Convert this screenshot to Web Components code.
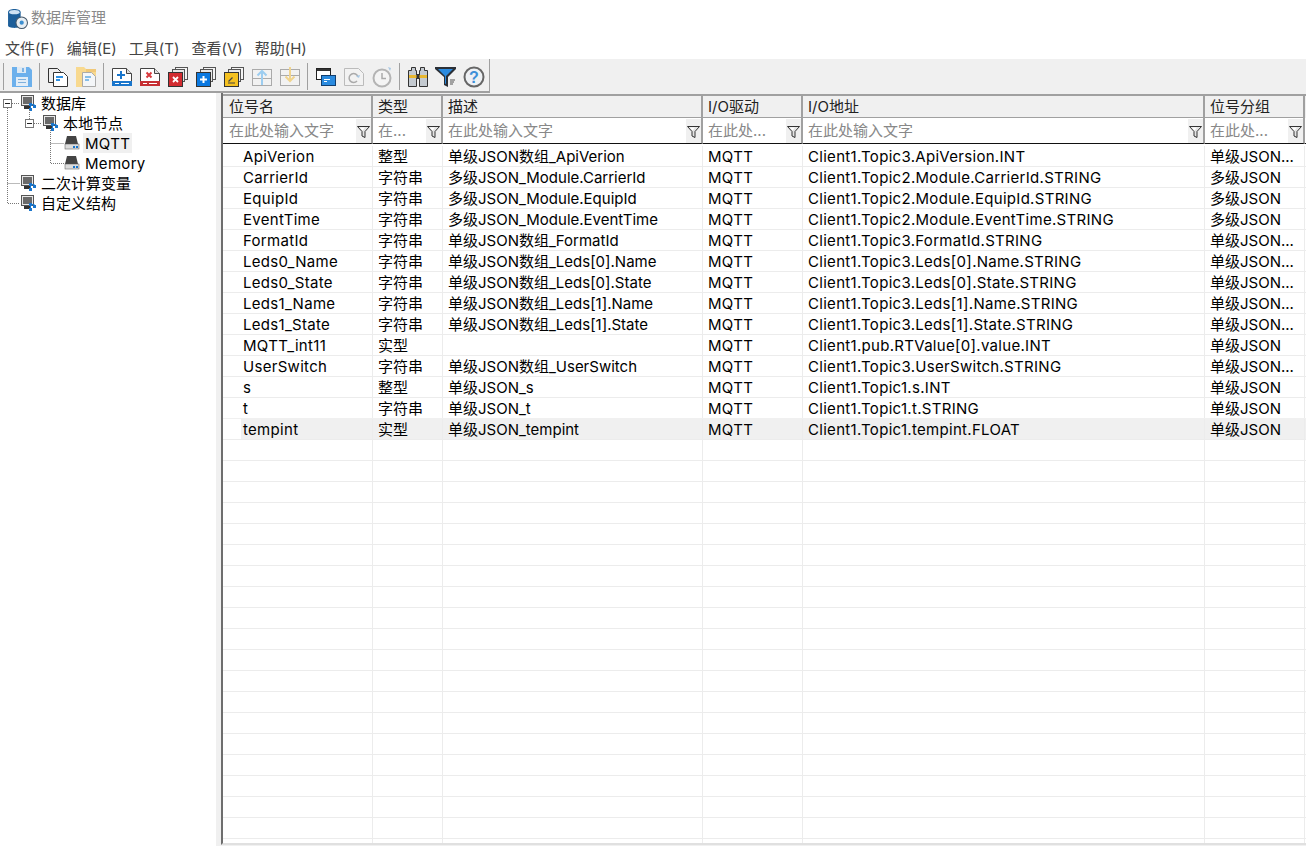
<!DOCTYPE html>
<html lang="zh">
<head>
<meta charset="utf-8">
<title>数据库管理</title>
<style>
	html, body { margin: 0; height: 100%; background: #fff; overflow: hidden; }
	body { font: 15px Inter, "Noto Sans CJK SC", sans-serif; color: #000; }
</style>
</head>
<body>
<db-app>
	<db-titlebar>数据库管理</db-titlebar>
	<db-menubar>
		<span>文件(F)</span><span>编辑(E)</span><span>工具(T)</span><span>查看(V)</span><span>帮助(H)</span>
	</db-menubar>
	<db-toolbar></db-toolbar>
	<db-main>
		<db-tree slot="left"></db-tree>
		<db-grid slot="right"></db-grid>
	</db-main>
</db-app>

<script>
// toolbar icons, all drawn on a 22x22 box
const stack = (fill, mark) => `
	<rect x="8.500" y="1.500" width="12" height="12" fill="#f4f4f4" stroke="#555"/>
	<rect x="5.500" y="3.500" width="12" height="12" fill="#e8e8e8" stroke="#555"/>
	<rect x="1.500" y="6.500" width="14" height="14" fill="${fill}" stroke="#333"/>${mark}`;
const newDoc = (color, mark) => `
	<path d="M1.500 2.500h14l5 5v12h-19z" fill="#fff" stroke="#444"/>
	<path d="M15.500 2.500v5h5" fill="#ddd" stroke="#444"/>
	<rect x="1" y="15" width="20" height="5" fill="${color}"/>
	<rect x="4" y="17" width="4" height="1" fill="#fff"/><rect x="10" y="17" width="8" height="1" fill="#fff"/>${mark}`;
const ICONS = {
	save: `<path d="M1 1h17l3 3v17H1z" fill="#6cb0ec"/><rect x="6" y="1" width="9" height="6" fill="#dde9f4"/><rect x="11" y="2" width="2" height="4" fill="#7fb4e4"/>
		<rect x="5" y="11" width="12" height="9" fill="#e2edf7"/><rect x="7" y="13" width="8" height="1" fill="#7fb0dc"/><rect x="7" y="16" width="8" height="1" fill="#7fb0dc"/>`,
	copy: `<path d="M1.500 2.500h9l3 3v11h-12z" fill="#eee" stroke="#333"/><path d="M6.500 6.500h10l4 4v10h-14z" fill="#fff" stroke="#333"/>
		<rect x="9" y="10" width="7" height="2" fill="#2f8fe0"/><rect x="9" y="13" width="4" height="2" fill="#2f8fe0"/>`,
	paste: `<path d="M1 1h8l2 2h10v18H1z" fill="#f8d98f"/><path d="M11 3h10v3H11z" fill="#f0c878"/><path d="M7.500 6.500h9l4 4v10h-13z" fill="#f4f6f8" stroke="#aaa"/>
		<rect x="10" y="10" width="6" height="2" fill="#85bde8"/><rect x="10" y="13" width="4" height="2" fill="#85bde8"/>`,
	addDoc: newDoc('#1a76cc', '<path d="M10 5v8M6 9h8" stroke="#1a76cc" stroke-width="2"/>'),
	delDoc: newDoc('#c62f33', '<path d="M7.500 6.500l5 5M12.500 6.500l-5 5" stroke="#d83a3e" stroke-width="2"/>'),
	delBox: stack('#d22b30', '<path d="M6 11l5 5M11 11l-5 5" stroke="#fff" stroke-width="1.800"/>'),
	addBox: stack('#0a78e0', '<path d="M8.500 10v7M5 13.500h7" stroke="#fff" stroke-width="2"/>'),
	editBox: stack('#f5c120', '<path d="M5 17h7M5.500 15.500l4-4" stroke="#444" stroke-width="1.200" fill="none"/>'),
	moveUp: `<rect x="1.500" y="3.500" width="19" height="16" fill="#f2f2f2" stroke="#aaa"/><path d="M1.500 12.500h19" stroke="#aaa"/>
		<path d="M11 19V5M6.500 9.500L11 5l4.500 4.500" stroke="#9ccdf0" stroke-width="2" fill="none"/>`,
	moveDown: `<rect x="1.500" y="3.500" width="19" height="16" fill="#f2f2f2" stroke="#aaa"/><path d="M1.500 9.500h19" stroke="#aaa"/>
		<path d="M11 1v14M6.500 10.500L11 15l4.500-4.500" stroke="#f0d48e" stroke-width="2" fill="none"/>`,
	windows: `<rect x="1.500" y="2.500" width="14" height="11" fill="#fff" stroke="#222"/><rect x="2" y="3" width="13" height="2" fill="#333"/>
		<rect x="6.500" y="9.500" width="14" height="10" fill="#2a8be0" stroke="#123f70"/><rect x="9" y="13" width="6" height="1" fill="#fff"/><rect x="9" y="15" width="3" height="1" fill="#fff"/>`,
	history: `<path d="M1.500 2.500h14l5 5v12h-19z" fill="#f2f2f2" stroke="#bbb"/><path d="M15 11a4.500 4.500 0 1 0-1 4" stroke="#aaa" stroke-width="1.500" fill="none"/><path d="M13 10l3 2 1-3z" fill="#a8c8e4"/>`,
	clock: `<circle cx="11" cy="12" r="8.500" fill="#f4f4f4" stroke="#b4b4b4" stroke-width="2"/><path d="M11 7v5.500h4" stroke="#aaa" stroke-width="1.500" fill="none"/><path d="M17 1l3 1-1 3z" fill="#a8c8e4"/>`,
	binoculars: `<path d="M4.500 1.500h4v3h1v16h-8v-16h3zM13.500 1.500h4v3h3v16h-8v-16h1z" fill="#c4cad0" stroke="#333"/><rect x="2" y="9" width="18" height="3" fill="#e8b730"/><rect x="9.500" y="8" width="3" height="5" fill="#333"/>`,
	filter: `<path d="M0 1h21v2l-8 8v10l-4-2v-8L0 3z" fill="#2a2f36"/><path d="M3 3h15l-7 7v8l-1-.5V10z" fill="#2a8be0"/><path d="M15 14h5M15 16h4M15 18h3" stroke="#555"/>`,
	help: `<circle cx="11" cy="11" r="9.500" fill="#eef1f4" stroke="#666" stroke-width="2"/><text x="11" y="16.500" text-anchor="middle" font-family="Liberation Sans" font-weight="700" font-size="16" fill="#3d8fd8">?</text>`
};

class DbApp extends HTMLElement {
	constructor() {
		super();
		this.attachShadow({mode: "open"});
		this.shadowRoot.innerHTML = `
		<style>
			:host { display: flex; flex-direction: column; height: 846px; overflow: hidden; background: #fff; }
		</style>
		<slot></slot>`;
	}
}

class DbTitlebar extends HTMLElement {
	constructor() {
		super();
		this.attachShadow({mode: "open"});
		this.shadowRoot.innerHTML = `
		<style>
			:host { display: flex; align-items: center; gap: 3px; height: 36px; box-sizing: border-box; padding: 0 0 3px 7px; color: #8a8a8a; flex: none; }
			svg { display: block; margin-top: 3px; }
		</style>
		<svg width="21" height="21" viewBox="0 0 20 20">
			<path d="M1 4c0-2 3-3 6-3s6 1 6 3v13c0 1-3 2-6 2s-6-1-6-2z" fill="#1d5f9a"/>
			<ellipse cx="7" cy="4" rx="5" ry="2" fill="#cfe2f3"/>
			<circle cx="14" cy="14" r="5.500" fill="#e8eef3" stroke="#44586a"/>
			<circle cx="14" cy="14" r="2" fill="#3c8fd0"/>
		</svg>
		<slot></slot>`;
	}
}

class DbMenubar extends HTMLElement {
	constructor() {
		super();
		this.attachShadow({mode: "open"});
		this.shadowRoot.innerHTML = `
		<style>
			:host { display: flex; height: 23px; align-items: center; gap: 12px; padding-left: 5px; color: #444; flex: none; }
		</style>
		<slot></slot>`;
	}
}

class DbToolButton extends HTMLElement {
	constructor() {
		super();
		this.attachShadow({mode: "open"});
	}
	connectedCallback() {
		this.shadowRoot.innerHTML = `
		<style>
			:host { display: flex; width: 28px; height: 100%; align-items: center; justify-content: center; }
			svg { display: block; }
		</style>
		<svg width="22" height="22" viewBox="0 0 22 22">${ICONS[this.getAttribute('icon')]}</svg>`;
	}
}

class DbToolbar extends HTMLElement {
	constructor() {
		super();
		this.attachShadow({mode: "open"});
	}
	connectedCallback() {
		const groups = [['save'], ['copy', 'paste'], ['addDoc', 'delDoc', 'delBox', 'addBox', 'editBox', 'moveUp', 'moveDown'], ['windows', 'history', 'clock'], ['binoculars', 'filter', 'help']];
		const html = groups.map(g => g.map(i => `<db-tool-button icon="${i}"></db-tool-button>`).join('')).join('<i class="sep"></i>');
		this.shadowRoot.innerHTML = `
		<style>
			:host { display: block; height: 34px; background: #f0f0f0; flex: none; }
			.bar { display: flex; width: 490px; height: 34px; box-sizing: border-box; padding: 3px 0 0 3px; border-right: 1px solid #a0a0a0; border-bottom: 2px solid #a0a0a0; }
			.grip { width: 1px; background: #a0a0a0; margin: 1px 4px 1px 0; }
			.sep { width: 1px; background: #a0a0a0; margin: 1px 4px 1px 3px; }
		</style>
		<div class="bar"><i class="grip"></i>${html}</div>`;
	}
}

class DbMain extends HTMLElement {
	constructor() {
		super();
		this.attachShadow({mode: "open"});
		this.shadowRoot.innerHTML = `
		<style>
			:host { display: flex; flex: 1; min-height: 0; background: #f0f0f0; }
			.left { width: 216px; background: #fff; flex: none; }
			.split { width: 5px; flex: none; }
			.right { flex: 1; min-width: 0; }
		</style>
		<div class="left"><slot name="left"></slot></div>
		<div class="split"></div>
		<div class="right"><slot name="right"></slot></div>`;
	}
}

const nodeIcon = `<svg width="16" height="16" viewBox="0 0 16 16">
	<rect x="1.500" y=".5" width="12" height="10" fill="#e8e8e8" stroke="#555"/><rect x="3" y="2" width="9" height="7" fill="#6a6a6a"/>
	<rect x="4" y="11" width="7" height="3" fill="#333"/>
	<rect x="9" y="8" width="3" height="3" fill="#1a76cc"/><rect x="13" y="10" width="3" height="3" fill="#1a76cc"/><rect x="9" y="13" width="3" height="3" fill="#1a76cc"/><path d="M12 9.500h2.500M10.500 11v2" stroke="#1a76cc"/>
</svg>`;
const diskIcon = `<svg width="16" height="16" viewBox="0 0 16 16">
	<path d="M3 1h9l2 8H1z" fill="#444"/><rect x="1" y="9" width="14" height="5" fill="#dcdcdc" stroke="#555" stroke-width=".5"/>
	<rect x="9" y="11" width="2" height="2" fill="#1a76cc"/><rect x="12" y="11" width="2" height="2" fill="#1a76cc"/>
</svg>`;

class DbTreeItem extends HTMLElement {
	constructor() {
		super();
		this.attachShadow({mode: "open"});
	}
	connectedCallback() {
		const icon = this.getAttribute('icon') == 'disk' ? diskIcon : nodeIcon;
		this.shadowRoot.innerHTML = `
		<style>
			:host { display: flex; align-items: center; height: 20px; padding-left: calc(var(--indent, 0) * 22px + 20px); }
			svg { display: block; flex: none; margin-right: 5px; }
			:host([selected]) span { background: #f0f0f0; }
			:host([icon=disk]) span { letter-spacing: .3px; }
			span { display: block; height: 20px; line-height: 22px; padding: 0 2px; margin-left: -2px; white-space: nowrap; }
		</style>
		${icon}<span><slot></slot></span>`;
	}
}

class DbTree extends HTMLElement {
	constructor() {
		super();
		this.attachShadow({mode: "open"});
		const box = (x, y) => `<rect x="${x}.5" y="${y}.5" width="8" height="8" fill="#fff" stroke="#777"/><path d="M${x + 2} ${y + 4.5}h5" stroke="#222"/>`;
		this.shadowRoot.innerHTML = `
		<style>
			:host { display: block; position: relative; }
			svg.lines { position: absolute; left: 0; top: -93px; pointer-events: none; }
		</style>
		<svg class="lines" width="216" height="300" viewBox="0 0 216 300">
			<path d="M7.500 108V203.500H20M7.500 183.500H20M12 103.500h8M29.500 110V119M34 123.500h8M50.500 130V163.500H64M50.500 143.500H64" fill="none" stroke="#777" stroke-dasharray="1 1"/>
			${box(3, 99)}${box(25, 119)}
		</svg>
		<db-tree-item>数据库</db-tree-item>
		<db-tree-item style="--indent:1">本地节点</db-tree-item>
		<db-tree-item style="--indent:2" icon="disk" selected>MQTT</db-tree-item>
		<db-tree-item style="--indent:2" icon="disk">Memory</db-tree-item>
		<db-tree-item>二次计算变量</db-tree-item>
		<db-tree-item>自定义结构</db-tree-item>`;
	}
}

const COLS = '150px 70px 260px 100px 402px 100px';
const HEADERS = ['位号名', '类型', '描述', 'I/O驱动', 'I/O地址', '位号分组'];
const HINTS = ['在此处输入文字', '在...', '在此处输入文字', '在此处...', '在此处输入文字', '在此处...'];
const ROWS = [
	['ApiVerion', '整型', '单级JSON数组_ApiVerion', 'MQTT', 'Client1.Topic3.ApiVersion.INT', '单级JSON...'],
	['CarrierId', '字符串', '多级JSON_Module.CarrierId', 'MQTT', 'Client1.Topic2.Module.CarrierId.STRING', '多级JSON'],
	['EquipId', '字符串', '多级JSON_Module.EquipId', 'MQTT', 'Client1.Topic2.Module.EquipId.STRING', '多级JSON'],
	['EventTime', '字符串', '多级JSON_Module.EventTime', 'MQTT', 'Client1.Topic2.Module.EventTime.STRING', '多级JSON'],
	['FormatId', '字符串', '单级JSON数组_FormatId', 'MQTT', 'Client1.Topic3.FormatId.STRING', '单级JSON...'],
	['Leds0_Name', '字符串', '单级JSON数组_Leds[0].Name', 'MQTT', 'Client1.Topic3.Leds[0].Name.STRING', '单级JSON...'],
	['Leds0_State', '字符串', '单级JSON数组_Leds[0].State', 'MQTT', 'Client1.Topic3.Leds[0].State.STRING', '单级JSON...'],
	['Leds1_Name', '字符串', '单级JSON数组_Leds[1].Name', 'MQTT', 'Client1.Topic3.Leds[1].Name.STRING', '单级JSON...'],
	['Leds1_State', '字符串', '单级JSON数组_Leds[1].State', 'MQTT', 'Client1.Topic3.Leds[1].State.STRING', '单级JSON...'],
	['MQTT_int11', '实型', '', 'MQTT', 'Client1.pub.RTValue[0].value.INT', '单级JSON'],
	['UserSwitch', '字符串', '单级JSON数组_UserSwitch', 'MQTT', 'Client1.Topic3.UserSwitch.STRING', '单级JSON...'],
	['s', '整型', '单级JSON_s', 'MQTT', 'Client1.Topic1.s.INT', '单级JSON'],
	['t', '字符串', '单级JSON_t', 'MQTT', 'Client1.Topic1.t.STRING', '单级JSON'],
	['tempint', '实型', '单级JSON_tempint', 'MQTT', 'Client1.Topic1.tempint.FLOAT', '单级JSON']
];

class DbGridRow extends HTMLElement {
	constructor() {
		super();
		this.attachShadow({mode: "open"});
		this.shadowRoot.innerHTML = `
		<style>
			:host { display: grid; grid-template-columns: ${COLS} 1fr; height: 21px; box-sizing: border-box; border-top: 1px solid #ececec; }
			:host(:first-of-type) { border-top-color: transparent; }
			:host([hot]) { border-top-color: #f0f0f0; }
		</style>
		<slot></slot>`;
	}
}

class DbGridCell extends HTMLElement {
	constructor() {
		super();
		this.attachShadow({mode: "open"});
		this.shadowRoot.innerHTML = `
		<style>
			:host { display: block; box-sizing: border-box; height: 20px; padding: 1px 0 0 5px; line-height: 20px; border-right: 1px solid #ececec; white-space: nowrap; overflow: hidden; }
			:host([first]) { padding-left: 0; }
			:host([first]) span { display: block; margin-left: 18px; padding-left: 2px; }
			:host([wide]) span { letter-spacing: .3px; }
			:host([hot]) { background: #f0f0f0; }
			:host([hot][first]) { background: #fff; padding-top: 0; }
			:host([hot][first]) span { background: #f0f0f0; padding-top: 1px; height: 19px; }
		</style>
		<span><slot></slot></span>`;
	}
}

class DbGrid extends HTMLElement {
	constructor() {
		super();
		this.attachShadow({mode: "open"});
		const funnel = `<svg width="13" height="13" viewBox="0 0 13 13"><path d="M.5 1.500h12L8 6.500v6l-3-1.500V6.500z" fill="#e4e4e4" stroke="#333"/><path d="M3 2.500h5L5.500 5.500z" fill="#fff"/></svg>`;
		const head = HEADERS.map(h => `<div class="h"><span>${h}</span></div>`).join('');
		const hint = HINTS.map(h => `<div class="f"><span>${h}</span><b>${funnel}</b></div>`).join('');
		const wide = [true, false, false, true, true, false];
		let body = '';
		ROWS.forEach((r, i) => {
			const hot = i == ROWS.length - 1 ? ' hot' : '';
			const cells = r.map((c, j) => `<db-grid-cell${j == 0 ? ' first' : ''}${wide[j] ? ' wide' : ''}${hot}>${c}</db-grid-cell>`).join('');
			body += `<db-grid-row${hot}>${cells}<db-grid-cell${hot}></db-grid-cell></db-grid-row>`;
		});
		for (let i = 0; i < 20; i++) {
			body += `<db-grid-row>${HEADERS.map(() => '<db-grid-cell></db-grid-cell>').join('')}<db-grid-cell></db-grid-cell></db-grid-row>`;
		}
		this.shadowRoot.innerHTML = `
		<style>
			:host { display: block; height: 752px; box-sizing: border-box; background: #fff; border-left: 2px solid #6e6e6e; border-bottom: 2px solid #e0e0e0; overflow: hidden; }
			.row { display: grid; grid-template-columns: ${COLS} 1fr; }
			.top { height: 1px; background: #f0f0f0; }
			.head { background: #f0f0f0; border-top: 2px solid #a0a0a0; }
			.h { height: 22px; box-sizing: border-box; border-right: 2px solid #a0a0a0; border-bottom: 1px solid #a0a0a0; padding-left: 5px; line-height: 21px; color: #222; }
			.h:first-child, .f:first-child { padding-left: 6px; }
			.hint { background: #fff; margin-bottom: 1px; }
			.f { height: 26px; box-sizing: border-box; display: flex; border-right: 2px solid #a0a0a0; border-bottom: 1px solid #111; padding-left: 5px; color: #888; line-height: 26px; }
			.f span { flex: 1; white-space: nowrap; overflow: hidden; }
			.f b { width: 15px; margin-top: 1px; background: #f0f0f0; display: flex; align-items: center; justify-content: center; font-weight: normal; }
			.end { border-bottom: 1px solid #111; }
			svg { display: block; }
		</style>
		<div class="top"></div>
		<div class="head row">${head}<div></div></div>
		<div class="hint row">${hint}<div class="end"></div></div>
		${body}`;
	}
}

customElements.define('db-app', DbApp);
customElements.define('db-titlebar', DbTitlebar);
customElements.define('db-menubar', DbMenubar);
customElements.define('db-tool-button', DbToolButton);
customElements.define('db-toolbar', DbToolbar);
customElements.define('db-main', DbMain);
customElements.define('db-tree-item', DbTreeItem);
customElements.define('db-tree', DbTree);
customElements.define('db-grid-row', DbGridRow);
customElements.define('db-grid-cell', DbGridCell);
customElements.define('db-grid', DbGrid);
</script>
</body>
</html>
